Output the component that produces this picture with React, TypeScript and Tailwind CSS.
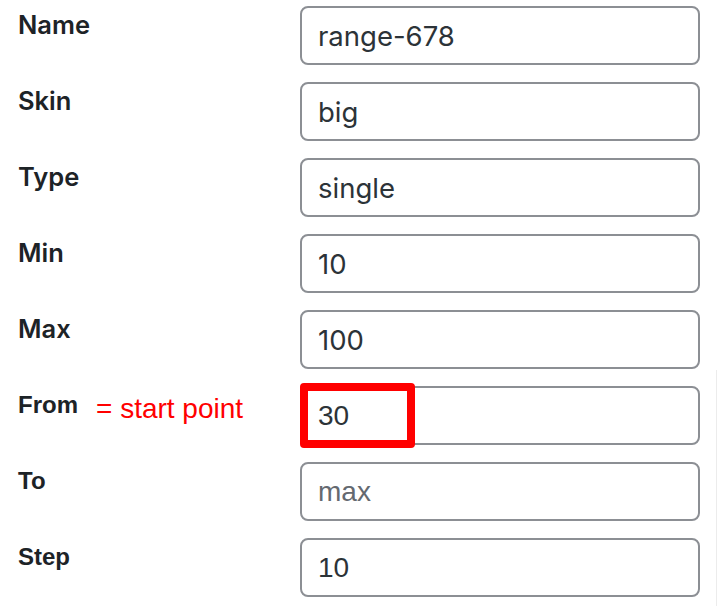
import React from "react";

type Row = {
  label: string;
  value?: string;
  placeholder?: string;
  legacy?: boolean;
  note?: string;
  marked?: boolean;
};

const rows: Row[] = [
  { label: "Name", value: "range-678" },
  { label: "Skin", value: "big" },
  { label: "Type", value: "single" },
  { label: "Min", value: "10" },
  { label: "Max", value: "100" },
  { label: "From", value: "30", legacy: true, note: "= start point", marked: true },
  { label: "To", placeholder: "max", legacy: true },
  { label: "Step", value: "10", legacy: true },
];

const FieldRow = ({ row }: { row: Row }) => {
  const font = row.legacy
    ? "font-['Liberation_Sans',Arial,sans-serif]"
    : "font-['Inter','Noto_Sans',sans-serif]";

  return (
    <div className="flex items-start h-[59px]">
      <div className="w-[282px] flex items-start">
        {row.legacy ? (
          <span className={`${font} text-[24px] leading-[30px] pt-[4px] font-bold text-[#1d2327]`}>
            {row.label}
          </span>
        ) : (
          <span className={`${font} text-[25.5px] leading-[30px] pt-[4px] font-semibold text-[#1d2327]`}>
            {row.label}
          </span>
        )}
        {row.note && (
          <span className="ml-[18px] pt-[8px] font-['Liberation_Sans',Arial,sans-serif] text-[28px] leading-[30px] text-[#ff0000]">
            {row.note}
          </span>
        )}
      </div>
      <div className="relative">
        <input
          readOnly
          value={row.value ?? ""}
          placeholder={row.placeholder}
          className={`${font} block w-[400px] h-[59px] pl-[16px] border-2 border-[#8c8f94] rounded-[8px] bg-white text-[#2c3338] placeholder:text-[#646970] outline-none ${
            row.legacy ? "text-[28px]" : "text-[27.5px]"
          }`}
        />
        {row.marked && (
          <div className="absolute left-0 top-[-3px] w-[115px] h-[65px] border-[8px] border-[#ff0000] rounded-[4px]" />
        )}
      </div>
    </div>
  );
};

export default function App() {
  return (
    <div className="flex w-[718px] h-[606px] bg-white overflow-hidden">
      <div className="w-[716px] pl-[18px] pt-[6px] flex flex-col gap-[17px]">
        {rows.map((row) => (
          <FieldRow key={row.label} row={row} />
        ))}
      </div>
      <div className="w-px mt-[370px] bg-[#ececec]" />
    </div>
  );
}
